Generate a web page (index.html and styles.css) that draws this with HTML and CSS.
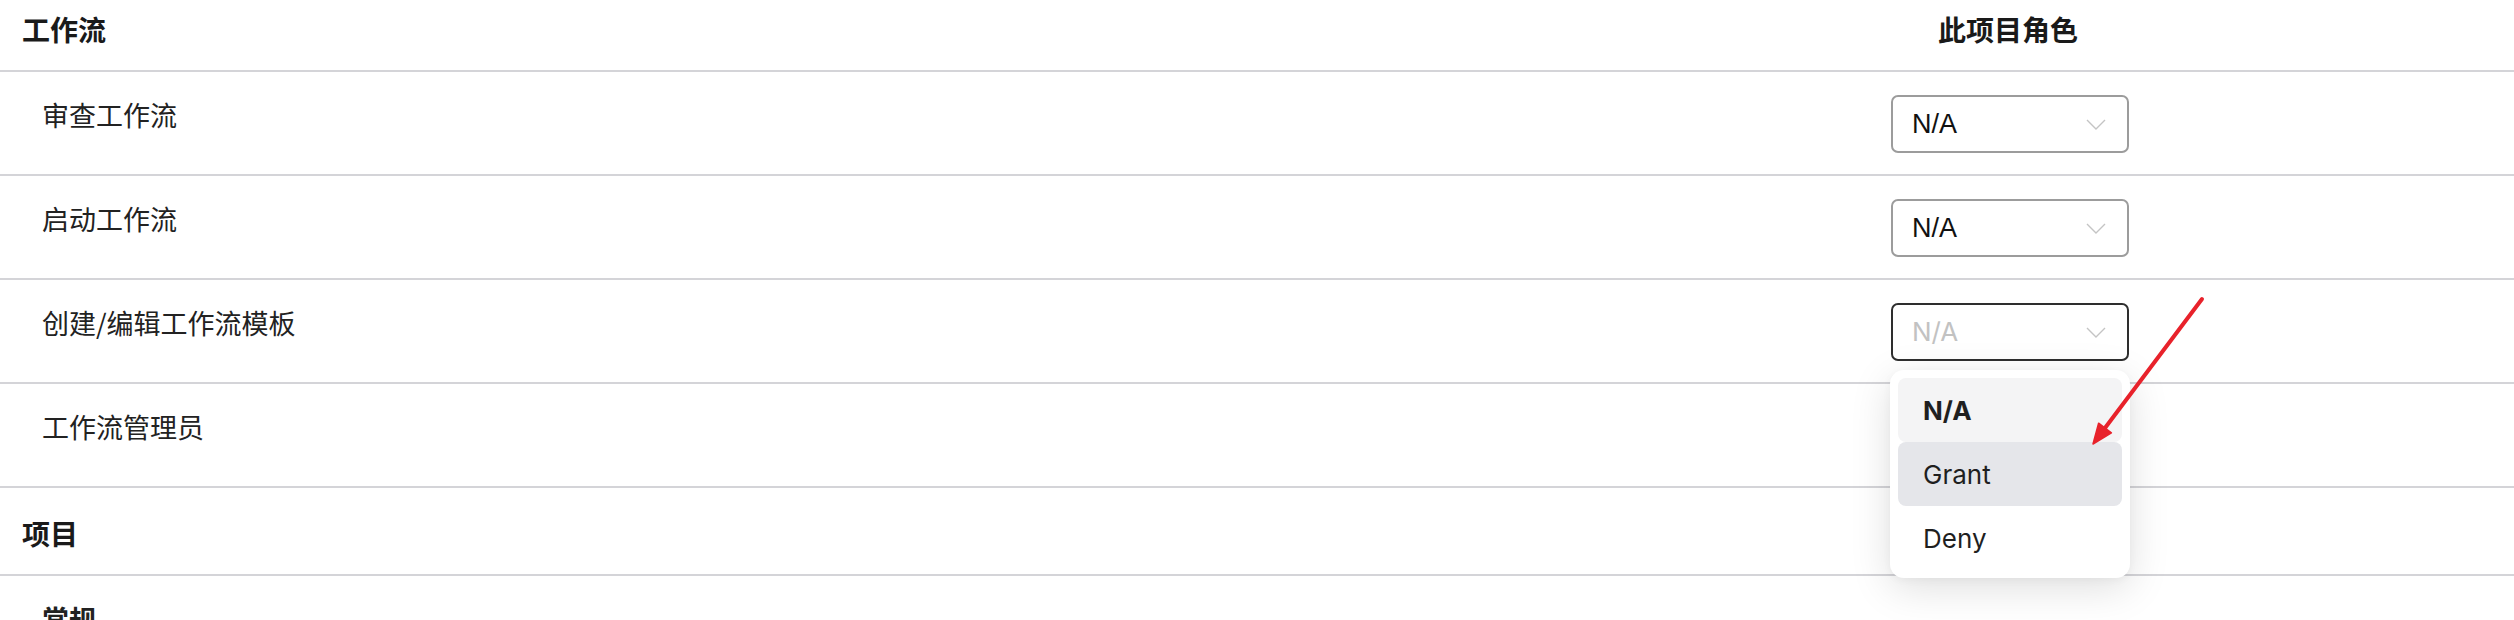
FILE: index.html
```html
<!DOCTYPE html>
<html lang="zh-CN">
<head>
<meta charset="utf-8">
<title>权限</title>
<link rel="stylesheet" href="styles.css">
</head>
<body>
<div class="page">
  <div class="table">
    <div class="row section">
      <div class="name">工作流</div>
      <div class="role"><span class="col-head">此项目角色</span></div>
    </div>
    <div class="row">
      <div class="item">审查工作流</div>
      <div class="role">
        <div class="select"><span class="value">N/A</span><svg class="chev" width="20" height="11" viewBox="0 0 20 11"><polyline points="1,1 10,10 19,1" fill="none" stroke="#c4c4c4" stroke-width="1.4"/></svg></div>
      </div>
    </div>
    <div class="row">
      <div class="item">启动工作流</div>
      <div class="role">
        <div class="select"><span class="value">N/A</span><svg class="chev" width="20" height="11" viewBox="0 0 20 11"><polyline points="1,1 10,10 19,1" fill="none" stroke="#c4c4c4" stroke-width="1.4"/></svg></div>
      </div>
    </div>
    <div class="row">
      <div class="item">创建/编辑工作流模板</div>
      <div class="role">
        <div class="select focused"><span class="value placeholder">N/A</span><svg class="chev" width="20" height="11" viewBox="0 0 20 11"><polyline points="1,1 10,10 19,1" fill="none" stroke="#c4c4c4" stroke-width="1.4"/></svg>
          <div class="menu">
            <div class="option selected">N/A</div>
            <div class="option hover">Grant</div>
            <div class="option">Deny</div>
          </div>
        </div>
      </div>
    </div>
    <div class="row">
      <div class="item">工作流管理员</div>
      <div class="role"></div>
    </div>
    <div class="row section">
      <div class="name">项目</div>
      <div class="role"></div>
    </div>
    <div class="row">
      <div class="item sub">常规</div>
      <div class="role"></div>
    </div>
  </div>
  <svg class="arrow" width="130" height="160" viewBox="0 0 130 160">
    <line x1="122" y1="9" x2="25" y2="138" stroke="#e8222b" stroke-width="4" stroke-linecap="round"/>
    <polygon points="13,154 31.4,142.8 18.6,133.2" fill="#e8222b" stroke="#e8222b" stroke-width="1.5" stroke-linejoin="round"/>
  </svg>
</div>
</body>
</html>
```

FILE: styles.css
```css
html, body {
  margin: 0;
  padding: 0;
  background: #ffffff;
}

body {
  font-family: "Noto Sans CJK SC", "Liberation Sans", sans-serif;
  color: #1c1c1c;
  overflow: hidden;
}

.page {
  position: relative;
  width: 2514px;
  height: 620px;
  overflow: hidden;
}

.table {
  margin-top: -16px;
}

.row {
  display: grid;
  grid-template-columns: 1891px 1fr;
  height: 104px;
  box-sizing: border-box;
  border-bottom: 2px solid #d4d4d8;
  padding-top: 23px;
  align-items: start;
}

.row.section {
  height: 88px;
  padding-top: 3px;
  align-items: center;
}

.name {
  padding-left: 22px;
  font-size: 28px;
  font-weight: 700;
  line-height: 40px;
  color: #1a1a1a;
}

.item {
  padding-left: 42px;
  font-size: 27px;
  line-height: 40px;
  color: #222222;
}

.item.sub {
  font-weight: 700;
}

.col-head {
  display: inline-block;
  margin-left: 47px;
  font-size: 28px;
  font-weight: 700;
  line-height: 40px;
  color: #1a1a1a;
  white-space: nowrap;
}

.select {
  position: relative;
  width: 238px;
  height: 58px;
  box-sizing: border-box;
  border: 2px solid #9c9c9c;
  border-radius: 7px;
  display: flex;
  align-items: center;
  justify-content: space-between;
  padding: 0 21px 0 19px;
  background: #ffffff;
}

.select.focused {
  border-color: #2e2e2e;
}

.value {
  font-family: "Liberation Sans", sans-serif;
  font-size: 27px;
  line-height: 1;
  color: #111111;
}

.value.placeholder {
  font-family: "Inter", sans-serif;
  font-size: 26px;
  color: #c2c2c2;
}

.chev {
  display: block;
}

.menu {
  position: absolute;
  left: -3px;
  top: 65px;
  width: 240px;
  box-sizing: border-box;
  padding: 8px;
  background: #ffffff;
  border-radius: 14px;
  box-shadow: 0 10px 40px rgba(0, 0, 0, 0.13), 0 2px 8px rgba(0, 0, 0, 0.04);
  z-index: 5;
}

.option {
  height: 64px;
  display: flex;
  align-items: center;
  padding-left: 25px;
  border-radius: 8px;
  font-family: "Inter", sans-serif;
  font-size: 26px;
  color: #1f1f1f;
}

.option.selected {
  background: #f4f4f5;
  font-weight: 700;
}

.option.hover {
  background: #e5e6ea;
}

.arrow {
  position: absolute;
  left: 2080px;
  top: 290px;
  z-index: 10;
}
```
